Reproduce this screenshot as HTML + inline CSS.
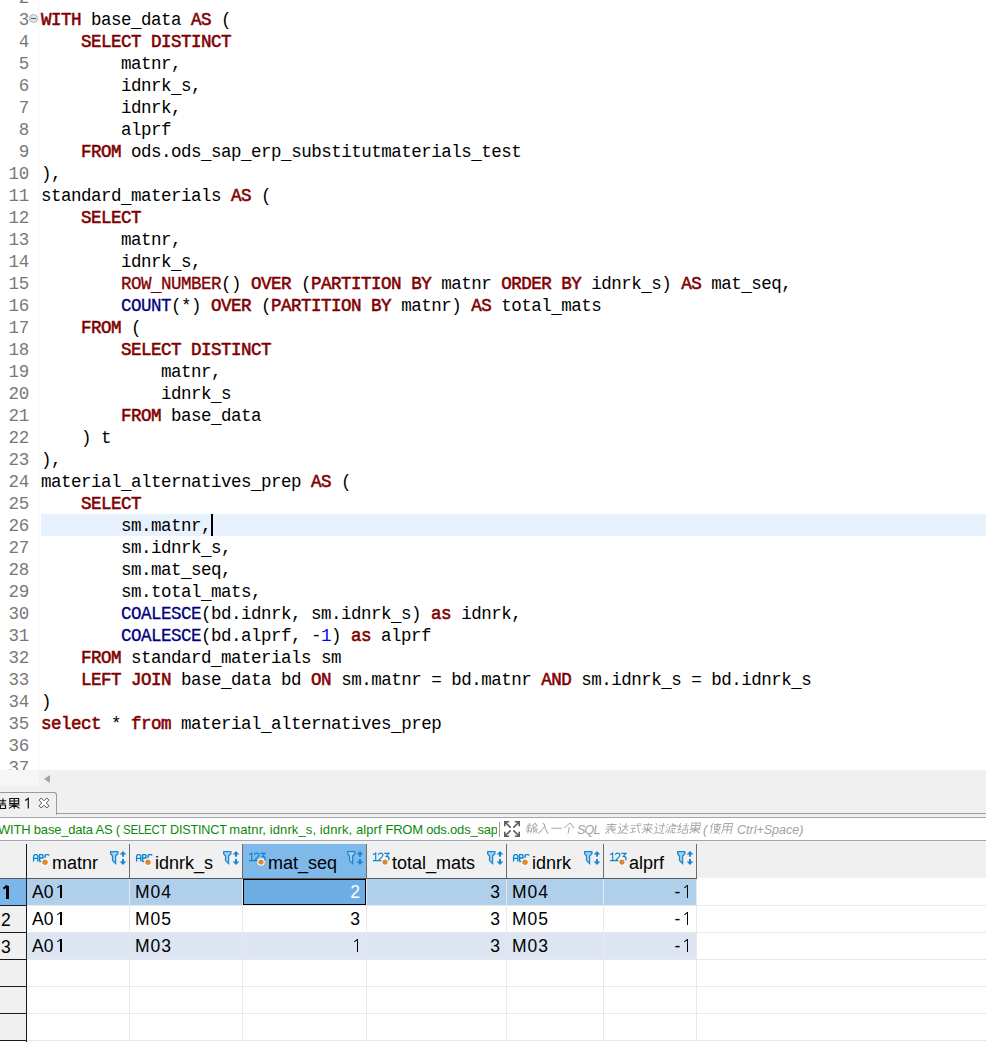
<!DOCTYPE html>
<html><head><meta charset="utf-8">
<style>
*{margin:0;padding:0;box-sizing:border-box}
html,body{width:986px;height:1042px;overflow:hidden;background:#fff}
body{position:relative;font-family:"Liberation Sans",sans-serif}
.ed{position:absolute;left:0;top:0;width:986px;height:770px;background:#fff;overflow:hidden}
.gl{position:absolute;left:38px;top:0;width:1px;height:770px;background:#f6f6f6}
.cur{position:absolute;left:41px;top:514px;width:945px;height:22px;background:#e8f2fe}
.ln{position:absolute;left:0;width:29px;text-align:right;height:22px;line-height:24px;font-family:"Liberation Mono",monospace;font-size:17.5px;letter-spacing:-0.3px;color:#787878;white-space:pre}
.cl{position:absolute;left:41px;height:22px;line-height:24px;font-family:"Liberation Mono",monospace;font-size:17.5px;letter-spacing:-0.5px;color:#000;white-space:pre}
i{font-style:normal}
.k{color:#800000;font-weight:normal;-webkit-text-stroke:0.55px #800000}
.f{color:#800000;-webkit-text-stroke:0.3px #800000}
.b{color:#000080;-webkit-text-stroke:0.3px #000080}
.n{color:#0000ff}
.caret{position:absolute;left:211px;top:514px;width:2px;height:22px;background:#000}
.fold{position:absolute;left:29px;top:14px;width:9px;height:9px;border-radius:50%;background:#dfe6ee;border:1px solid #a8b4c0}
.fold:after{content:"";position:absolute;left:1px;top:3px;width:5px;height:1px;background:#556}
.hs{position:absolute;left:0;top:770px;width:986px;height:16px;background:#f0f0f0}
.hsl{position:absolute;left:0;top:770px;width:39px;height:16px;background:#f6f6f6}
.arr{position:absolute;left:44px;top:775px;width:0;height:0;border-top:4px solid transparent;border-bottom:4px solid transparent;border-right:6px solid #a3a3a3}
.tabrow{position:absolute;left:0;top:786px;width:986px;height:32px;background:#f0f0f0}
.tab{position:absolute;left:-2px;top:792px;width:59px;height:23px;border:1px solid #9a9a9a;border-bottom:none;border-top-right-radius:3px;background:#f0f0f0}
.tbl{position:absolute;left:56px;top:813px;width:930px;height:1px;background:#9c9ca2}
.tbl2{position:absolute;left:0;top:817px;width:986px;height:1px;background:#a6a6ae}
.tabt{position:absolute;left:23px;top:794px;font-size:15px;line-height:18px;color:#000}
.filt{position:absolute;left:0;top:818px;width:986px;height:22px;background:#fff}
.ftxt{position:absolute;left:-2px;top:819px;width:499px;overflow:hidden;height:22px;line-height:22px;font-size:13px;letter-spacing:-0.2px;color:#0a8a0a;white-space:pre}
.fsep{position:absolute;left:499px;top:822px;width:1px;height:15px;background:#9a9a9a}
.phs{position:absolute;left:500px;top:818px}
.tabs{position:absolute;left:0;top:792px}
.exp{position:absolute;left:503.5px;top:820.5px}
.ph{position:absolute;left:577px;top:819px;height:22px;line-height:22px;font-size:12.5px;font-style:italic;color:#a2a2a2;white-space:pre}
.gtl{position:absolute;left:0;top:840px;width:986px;height:1px;background:#a6a6ae}
.grid{position:absolute;left:0;top:841px;width:986px;height:201px;background:#fff}
.hrow{position:absolute;left:0;top:841px;width:986px;height:37px;background:#f0f0f0}
.hc{position:absolute;top:844px;height:34px}
.hvl{position:absolute;top:844px;width:1px;height:34px;background:#6b6b6b}
.hbl{position:absolute;left:0;top:878px;width:697px;height:1px;background:#5a5a5a}
.ti{position:absolute;top:851px}
.fi{position:absolute;top:850px}
.ht{position:absolute;top:850px;height:26px;line-height:26px;font-size:18px;color:#000;white-space:pre}
.rb{position:absolute;left:27px;width:669px;height:26px}
.rl{position:absolute;left:27px;width:959px;height:1px;background:#e8e8e8}
.rnl{position:absolute;left:0;width:26px;height:1px;background:#1a1a1a}
.rn{position:absolute;left:0;width:26px;height:26px}
.rnt{position:absolute;left:1px;width:22px;height:26px;line-height:26px;font-size:17.5px;color:#000}
.ct{position:absolute;height:26px;line-height:26px;font-size:17.5px;color:#000;white-space:pre}
.cvl{position:absolute;top:879px;width:1px;height:163px;background:#e8e8e8}
.rnv{position:absolute;left:26px;top:844px;width:1px;height:198px;background:#1a1a1a}
.sel{position:absolute;left:243px;top:879px;width:123px;height:26px;background:#6eade4;border:1px solid #000}
.selt{position:absolute;left:243px;top:879px;width:117px;height:26px;line-height:26px;font-size:17.5px;color:#fff;text-align:right}
.one{display:inline-block;position:relative;width:9.73px;height:1px}
.one:before{content:"";position:absolute;left:6.3px;bottom:0;width:1.9px;height:12.6px;background:currentColor}
.one:after{content:"";position:absolute;left:3.3px;bottom:10.3px;width:4px;height:1.4px;background:currentColor;transform:rotate(-38deg)}
.ob:before{width:2.6px;left:5.2px}
.ob:after{height:2.3px;left:1.6px;width:5.2px}
u{position:relative;top:2px;text-decoration:none}
</style></head><body>

<div class="ed">
<div class="gl"></div>
<div class="cur"></div>
<div class="ln" style="top:-14px">2</div><div class="cl" style="top:-14px"></div>
<div class="ln" style="top:8px">3</div><div class="cl" style="top:8px"><i class="k">WITH</i> base<u>_</u>data <i class="k">AS</i> (</div>
<div class="ln" style="top:30px">4</div><div class="cl" style="top:30px">    <i class="k">SELECT</i> <i class="k">DISTINCT</i></div>
<div class="ln" style="top:52px">5</div><div class="cl" style="top:52px">        matnr,</div>
<div class="ln" style="top:74px">6</div><div class="cl" style="top:74px">        idnrk<u>_</u>s,</div>
<div class="ln" style="top:96px">7</div><div class="cl" style="top:96px">        idnrk,</div>
<div class="ln" style="top:118px">8</div><div class="cl" style="top:118px">        alprf</div>
<div class="ln" style="top:140px">9</div><div class="cl" style="top:140px">    <i class="k">FROM</i> ods.ods<u>_</u>sap<u>_</u>erp<u>_</u>substitutmaterials<u>_</u>test</div>
<div class="ln" style="top:162px">10</div><div class="cl" style="top:162px">),</div>
<div class="ln" style="top:184px">11</div><div class="cl" style="top:184px">standard<u>_</u>materials <i class="k">AS</i> (</div>
<div class="ln" style="top:206px">12</div><div class="cl" style="top:206px">    <i class="k">SELECT</i></div>
<div class="ln" style="top:228px">13</div><div class="cl" style="top:228px">        matnr,</div>
<div class="ln" style="top:250px">14</div><div class="cl" style="top:250px">        idnrk<u>_</u>s,</div>
<div class="ln" style="top:272px">15</div><div class="cl" style="top:272px">        <i class="f">ROW<u>_</u>NUMBER</i>() <i class="k">OVER</i> (<i class="k">PARTITION</i> <i class="k">BY</i> matnr <i class="k">ORDER</i> <i class="k">BY</i> idnrk<u>_</u>s) <i class="k">AS</i> mat<u>_</u>seq,</div>
<div class="ln" style="top:294px">16</div><div class="cl" style="top:294px">        <i class="b">COUNT</i>(*) <i class="k">OVER</i> (<i class="k">PARTITION</i> <i class="k">BY</i> matnr) <i class="k">AS</i> total<u>_</u>mats</div>
<div class="ln" style="top:316px">17</div><div class="cl" style="top:316px">    <i class="k">FROM</i> (</div>
<div class="ln" style="top:338px">18</div><div class="cl" style="top:338px">        <i class="k">SELECT</i> <i class="k">DISTINCT</i></div>
<div class="ln" style="top:360px">19</div><div class="cl" style="top:360px">            matnr,</div>
<div class="ln" style="top:382px">20</div><div class="cl" style="top:382px">            idnrk<u>_</u>s</div>
<div class="ln" style="top:404px">21</div><div class="cl" style="top:404px">        <i class="k">FROM</i> base<u>_</u>data</div>
<div class="ln" style="top:426px">22</div><div class="cl" style="top:426px">    ) t</div>
<div class="ln" style="top:448px">23</div><div class="cl" style="top:448px">),</div>
<div class="ln" style="top:470px">24</div><div class="cl" style="top:470px">material<u>_</u>alternatives<u>_</u>prep <i class="k">AS</i> (</div>
<div class="ln" style="top:492px">25</div><div class="cl" style="top:492px">    <i class="k">SELECT</i></div>
<div class="ln" style="top:514px">26</div><div class="cl" style="top:514px">        sm.matnr,</div>
<div class="ln" style="top:536px">27</div><div class="cl" style="top:536px">        sm.idnrk<u>_</u>s,</div>
<div class="ln" style="top:558px">28</div><div class="cl" style="top:558px">        sm.mat<u>_</u>seq,</div>
<div class="ln" style="top:580px">29</div><div class="cl" style="top:580px">        sm.total<u>_</u>mats,</div>
<div class="ln" style="top:602px">30</div><div class="cl" style="top:602px">        <i class="b">COALESCE</i>(bd.idnrk, sm.idnrk<u>_</u>s) <i class="k">as</i> idnrk,</div>
<div class="ln" style="top:624px">31</div><div class="cl" style="top:624px">        <i class="b">COALESCE</i>(bd.alprf, -<i class="n">1</i>) <i class="k">as</i> alprf</div>
<div class="ln" style="top:646px">32</div><div class="cl" style="top:646px">    <i class="k">FROM</i> standard<u>_</u>materials sm</div>
<div class="ln" style="top:668px">33</div><div class="cl" style="top:668px">    <i class="k">LEFT</i> <i class="k">JOIN</i> base<u>_</u>data bd <i class="k">ON</i> sm.matnr = bd.matnr <i class="k">AND</i> sm.idnrk<u>_</u>s = bd.idnrk<u>_</u>s</div>
<div class="ln" style="top:690px">34</div><div class="cl" style="top:690px">)</div>
<div class="ln" style="top:712px">35</div><div class="cl" style="top:712px"><i class="k">select</i> * <i class="k">from</i> material<u>_</u>alternatives<u>_</u>prep</div>
<div class="ln" style="top:734px">36</div><div class="cl" style="top:734px"></div>
<div class="ln" style="top:756px">37</div><div class="cl" style="top:756px"></div>
<div class="fold"></div>
<div class="caret"></div>
</div>
<div class="hs"></div><div class="hsl"></div><div class="arr"></div>
<div class="tabrow"></div>
<div class="tab"></div>
<div class="tbl"></div><div class="tbl2"></div>
<svg class="tabs" width="60" height="22" viewBox="0 792 60 22"><g fill="none" stroke="#111" stroke-width="1.15"><path transform="translate(-5.3,798) scale(1.0,0.93)" d="M2.6 0.5L0.6 4H3.2L0.5 7.6L4 7 M0.5 10.6L4.2 9.4 M5 3H11.5 M8.2 0.5V5.6 M5.6 5.6H10.8 M5.6 7.6H10.8V11.2H5.6Z"/><path transform="translate(8.4,798) scale(0.98,0.93)" d="M1.5 0.5H10.5V6H1.5Z M1.5 3.2H10.5 M6 0.5V11.5 M0.5 7.6H11.5 M6 7.6L0.5 11.2 M6 7.6L11.5 11.2"/></g><path d="M25.2 800.6L28.3 798.4V808.6" fill="none" stroke="#111" stroke-width="1.2"/><path d="M39.00 800.20L41.20 798.00L44.00 800.80L46.80 798.00L49.00 800.20L46.20 803.00L49.00 805.80L46.80 808.00L44.00 805.20L41.20 808.00L39.00 805.80L41.80 803.00Z" fill="#fff" stroke="#555" stroke-width="1"/></svg>
<div class="filt"></div>
<div class="ftxt">WITH base_data AS ( <span style="display:inline-block;transform-origin:0 0;transform:scaleX(0.88);margin-right:-6.3px">SELECT </span><span style="display:inline-block;transform-origin:0 0;transform:scaleX(0.971);margin-right:-1.8px">DISTINCT </span><span style="letter-spacing:0.1px">matnr, idnrk_s, idnrk, alprf </span>FROM ods.ods_sap_erp_substitutmaterials_test</div>
<div class="fsep"></div>
<svg class="phs" width="320" height="22" viewBox="0 0 320 22"><g fill="none" stroke="#a9a9a9" stroke-width="1"><path transform="translate(25,4.5) translate(0,11.5) skewX(-10) translate(0,-11.5) scale(0.95,0.96)" d="M0.5 2.8H5 M2.8 0.5V11.5 M0.8 5.6H5 M0.5 8.8H5.5 M1.2 4.2L1 7.5 M5.8 4L8.6 0.8L11.5 4 M6.8 4.6H10.4 M6 6V11.5 M6 6H8.6V11 M10 6.2V10 M11.5 5.6V11.5"/><path transform="translate(37.3,4.5) translate(0,11.5) skewX(-10) translate(0,-11.5) scale(0.95,0.96)" d="M3.8 0.8Q6 1.2 6.6 4.2T11.5 11.5 M6.2 3.8Q4.5 9 0.5 11.5"/><path transform="translate(49.8,4.5) translate(0,11.5) skewX(-10) translate(0,-11.5) scale(0.95,0.96)" d="M0.5 6H11.5"/><path transform="translate(62.3,4.5) translate(0,11.5) skewX(-10) translate(0,-11.5) scale(0.95,0.96)" d="M6 0.5L0.5 6 M6 0.5L11.5 6 M6 4.6V11.5"/><path transform="translate(104.4,4.5) translate(0,11.5) skewX(-10) translate(0,-11.5) scale(0.95,0.96)" d="M1 2H11 M1.6 4.4H10.4 M0.5 6.8H11.5 M6 0.5V6.8 M4.5 6.8Q3 9.5 0.8 11.5 M6 6.8Q8 10.5 11.5 11.5 M4 9.6V11.5 M7.5 9L10.5 7.6"/><path transform="translate(116.6,4.5) translate(0,11.5) skewX(-10) translate(0,-11.5) scale(0.95,0.96)" d="M1.2 0.8L2.8 2.6 M0.5 5H3V10 M0.5 11.5Q3 9.8 11.5 11.5 M4.6 4H11.5 M8 0.5V4Q7.6 7.8 4.6 9.6 M8.4 5.2L11.2 8.6"/><path transform="translate(128.7,4.5) translate(0,11.5) skewX(-10) translate(0,-11.5) scale(0.95,0.96)" d="M0.5 3H11.5 M7.8 0.5Q8.4 8 11.5 11 M9.6 0.8L10.8 2 M1 6H6.5 M3.6 6V10.2 M0.5 10.8L6.8 9.4"/><path transform="translate(140.8,4.5) translate(0,11.5) skewX(-10) translate(0,-11.5) scale(0.95,0.96)" d="M1 2.4H11 M6 0.5V11.5 M2.4 3.8L3.6 6 M9.6 3.8L8.4 6 M0.5 6.8H11.5 M6 6.8L0.8 11 M6 6.8L11.2 11"/><path transform="translate(152.8,4.5) translate(0,11.5) skewX(-10) translate(0,-11.5) scale(0.95,0.96)" d="M1.2 0.8L2.8 2.6 M0.5 5H3V10 M0.5 11.5Q3 9.8 11.5 11.5 M4.6 3.4H11.5 M9.2 0.5V9.4L8 8.8 M6 5.4L7.2 7.4"/><path transform="translate(164.8,4.5) translate(0,11.5) skewX(-10) translate(0,-11.5) scale(0.95,0.96)" d="M0.8 1.4L2 2.6 M0.5 4.6L1.6 5.6 M0.5 10.4L2.6 7 M6.5 0.5V2.6H10 M4 3.6H11.5V5 M4 3.6V6.5Q4 9.5 2.8 11.5 M5.6 6.2H10.6 M6.2 8L5.6 11 M7.6 7.4V10.6H11.2 M9.2 8L9.8 9.2"/><path transform="translate(176.8,4.5) translate(0,11.5) skewX(-10) translate(0,-11.5) scale(0.95,0.96)" d="M2.6 0.5L0.6 4H3.2L0.5 7.6L4 7 M0.5 10.6L4.2 9.4 M5 3H11.5 M8.2 0.5V5.6 M5.6 5.6H10.8 M5.6 7.6H10.8V11.2H5.6Z"/><path transform="translate(188.6,4.5) translate(0,11.5) skewX(-10) translate(0,-11.5) scale(0.95,0.96)" d="M1.5 0.5H10.5V6H1.5Z M1.5 3.2H10.5 M6 0.5V11.5 M0.5 7.6H11.5 M6 7.6L0.5 11.2 M6 7.6L11.5 11.2"/><path transform="translate(208.7,4.5) translate(0,11.5) skewX(-10) translate(0,-11.5) scale(0.95,0.96)" d="M3 0.5L0.5 5 M2 3.4V11.5 M4 2H11.5 M7.6 0.5V8 M5 4H10.6V7H5Z M5.2 8.4Q8 11 11.5 11.5 M10 8L5 11.5"/><path transform="translate(220.7,4.5) translate(0,11.5) skewX(-10) translate(0,-11.5) scale(0.95,0.96)" d="M1.6 1H10.6V11.5L9.4 11 M1.6 1V7Q1.6 10 0.5 11.5 M1.6 4.4H10.6 M1.6 7.6H10.6 M6.1 1V11.5"/></g></svg>
<div class="ph" style="left:577px;letter-spacing:-0.8px">SQL</div><div class="ph" style="left:703px">(</div><div class="ph" style="left:737px">Ctrl+Space)</div>
<svg class="exp" width="16" height="16" viewBox="0 0 16 16"><path d="M0.8 5.2V0.8H5.2M1.2 1.2L6.6 6.6M10.8 0.8H15.2V5.2M14.8 1.2L9.4 6.6M0.8 10.8V15.2H5.2M1.2 14.8L6.6 9.4M15.2 10.8V15.2H10.8M14.8 14.8L9.4 9.4" fill="none" stroke="#5e5e5e" stroke-width="1.6"/></svg>
<div class="gtl"></div>
<div class="grid"></div>
<div class="hrow"></div>
<div class="hc" style="left:27px;width:102px;background:#f0f0f0"></div>
<div class="hvl" style="left:129px"></div>
<svg class="ti" height="16" style="left:32px" width="18" viewBox="0 0 18 16"><g>
<path d="M1.6 10.5V4.9L2.8 3.6H4.6L5.8 4.9V10.5M1.6 7.4H5.8" fill="none" stroke="#0a84d0" stroke-width="1.35"/>
<path d="M7.6 10.5V3.6H10.2L11 4.4V6.2L10.2 7H7.6M10.2 7L11.2 7.8V9.7L10.4 10.5H7.6" fill="none" stroke="#0a84d0" stroke-width="1.35"/>
<path d="M17.2 4.4L16.4 3.6H13.9L13.1 4.4V7.5" fill="none" stroke="#0a84d0" stroke-width="1.35"/>
<circle cx="13" cy="11.2" r="3.3" fill="#e08632" stroke="#fff" stroke-width="1.1"/>
</g></svg>
<div class="ht" style="left:52px">matnr</div>
<svg class="fi" style="left:110px" width="18" height="16" viewBox="0 0 18 16"><g>
<path d="M0.6 1.6H7.9V3.7L5.6 6V13.6L2.5 10.5V6L0.6 3.7Z" fill="#a3d2f2" stroke="#1c86d2" stroke-width="1.25"/>
<path d="M9.6 4.4L13 1L16.4 4.4Z M12 4.4H14V6.8H12Z M12 8.9H14V11.6H12Z M9.6 11.6H16.4L13 15Z" fill="#1c86d2"/>
</g></svg>
<div class="hc" style="left:130px;width:112px;background:#f0f0f0"></div>
<div class="hvl" style="left:242px"></div>
<svg class="ti" height="16" style="left:135px" width="18" viewBox="0 0 18 16"><g>
<path d="M1.6 10.5V4.9L2.8 3.6H4.6L5.8 4.9V10.5M1.6 7.4H5.8" fill="none" stroke="#0a84d0" stroke-width="1.35"/>
<path d="M7.6 10.5V3.6H10.2L11 4.4V6.2L10.2 7H7.6M10.2 7L11.2 7.8V9.7L10.4 10.5H7.6" fill="none" stroke="#0a84d0" stroke-width="1.35"/>
<path d="M17.2 4.4L16.4 3.6H13.9L13.1 4.4V7.5" fill="none" stroke="#0a84d0" stroke-width="1.35"/>
<circle cx="13" cy="11.2" r="3.3" fill="#e08632" stroke="#fff" stroke-width="1.1"/>
</g></svg>
<div class="ht" style="left:155px">idnrk_s</div>
<svg class="fi" style="left:223px" width="18" height="16" viewBox="0 0 18 16"><g>
<path d="M0.6 1.6H7.9V3.7L5.6 6V13.6L2.5 10.5V6L0.6 3.7Z" fill="#a3d2f2" stroke="#1c86d2" stroke-width="1.25"/>
<path d="M9.6 4.4L13 1L16.4 4.4Z M12 4.4H14V6.8H12Z M12 8.9H14V11.6H12Z M9.6 11.6H16.4L13 15Z" fill="#1c86d2"/>
</g></svg>
<div class="hc" style="left:243px;width:123px;background:#7fb9ea"></div>
<div class="hvl" style="left:366px"></div>
<svg class="ti" height="16" style="left:248px" width="18" viewBox="0 0 18 16"><g>
<path d="M1.1 3.7L3.7 2.1V9.6M1 9.6H5.6M6.3 3.7Q6.9 2.1 8.6 2.1Q10.9 2.1 10.9 4.1Q10.9 5.6 6.3 9.6H11.3M12.3 2.3H16.9L14.3 5.3Q17.1 5.3 17.1 7.6Q17.1 9.8 14.6 9.8" fill="none" stroke="#0a84d0" stroke-width="1.15"/>
<circle cx="13" cy="11.1" r="3.2" fill="#e08632" stroke="#fff" stroke-width="1.1"/>
</g></svg>
<div class="ht" style="left:268px">mat_seq</div>
<svg class="fi" style="left:347px" width="18" height="16" viewBox="0 0 18 16"><g>
<path d="M0.6 1.6H7.9V3.7L5.6 6V13.6L2.5 10.5V6L0.6 3.7Z" fill="#a3d2f2" stroke="#1c86d2" stroke-width="1.25"/>
<path d="M9.6 4.4L13 1L16.4 4.4Z M12 4.4H14V6.8H12Z M12 8.9H14V11.6H12Z M9.6 11.6H16.4L13 15Z" fill="#1c86d2"/>
</g></svg>
<div class="hc" style="left:367px;width:139px;background:#f0f0f0"></div>
<div class="hvl" style="left:506px"></div>
<svg class="ti" height="16" style="left:372px" width="18" viewBox="0 0 18 16"><g>
<path d="M1.1 3.7L3.7 2.1V9.6M1 9.6H5.6M6.3 3.7Q6.9 2.1 8.6 2.1Q10.9 2.1 10.9 4.1Q10.9 5.6 6.3 9.6H11.3M12.3 2.3H16.9L14.3 5.3Q17.1 5.3 17.1 7.6Q17.1 9.8 14.6 9.8" fill="none" stroke="#0a84d0" stroke-width="1.15"/>
<circle cx="13" cy="11.1" r="3.2" fill="#e08632" stroke="#fff" stroke-width="1.1"/>
</g></svg>
<div class="ht" style="left:392px">total_mats</div>
<svg class="fi" style="left:487px" width="18" height="16" viewBox="0 0 18 16"><g>
<path d="M0.6 1.6H7.9V3.7L5.6 6V13.6L2.5 10.5V6L0.6 3.7Z" fill="#a3d2f2" stroke="#1c86d2" stroke-width="1.25"/>
<path d="M9.6 4.4L13 1L16.4 4.4Z M12 4.4H14V6.8H12Z M12 8.9H14V11.6H12Z M9.6 11.6H16.4L13 15Z" fill="#1c86d2"/>
</g></svg>
<div class="hc" style="left:507px;width:96px;background:#f0f0f0"></div>
<div class="hvl" style="left:603px"></div>
<svg class="ti" height="16" style="left:512px" width="18" viewBox="0 0 18 16"><g>
<path d="M1.6 10.5V4.9L2.8 3.6H4.6L5.8 4.9V10.5M1.6 7.4H5.8" fill="none" stroke="#0a84d0" stroke-width="1.35"/>
<path d="M7.6 10.5V3.6H10.2L11 4.4V6.2L10.2 7H7.6M10.2 7L11.2 7.8V9.7L10.4 10.5H7.6" fill="none" stroke="#0a84d0" stroke-width="1.35"/>
<path d="M17.2 4.4L16.4 3.6H13.9L13.1 4.4V7.5" fill="none" stroke="#0a84d0" stroke-width="1.35"/>
<circle cx="13" cy="11.2" r="3.3" fill="#e08632" stroke="#fff" stroke-width="1.1"/>
</g></svg>
<div class="ht" style="left:532px">idnrk</div>
<svg class="fi" style="left:584px" width="18" height="16" viewBox="0 0 18 16"><g>
<path d="M0.6 1.6H7.9V3.7L5.6 6V13.6L2.5 10.5V6L0.6 3.7Z" fill="#a3d2f2" stroke="#1c86d2" stroke-width="1.25"/>
<path d="M9.6 4.4L13 1L16.4 4.4Z M12 4.4H14V6.8H12Z M12 8.9H14V11.6H12Z M9.6 11.6H16.4L13 15Z" fill="#1c86d2"/>
</g></svg>
<div class="hc" style="left:604px;width:92px;background:#f0f0f0"></div>
<div class="hvl" style="left:696px"></div>
<svg class="ti" height="16" style="left:609px" width="18" viewBox="0 0 18 16"><g>
<path d="M1.1 3.7L3.7 2.1V9.6M1 9.6H5.6M6.3 3.7Q6.9 2.1 8.6 2.1Q10.9 2.1 10.9 4.1Q10.9 5.6 6.3 9.6H11.3M12.3 2.3H16.9L14.3 5.3Q17.1 5.3 17.1 7.6Q17.1 9.8 14.6 9.8" fill="none" stroke="#0a84d0" stroke-width="1.15"/>
<circle cx="13" cy="11.1" r="3.2" fill="#e08632" stroke="#fff" stroke-width="1.1"/>
</g></svg>
<div class="ht" style="left:629px">alprf</div>
<svg class="fi" style="left:677px" width="18" height="16" viewBox="0 0 18 16"><g>
<path d="M0.6 1.6H7.9V3.7L5.6 6V13.6L2.5 10.5V6L0.6 3.7Z" fill="#a3d2f2" stroke="#1c86d2" stroke-width="1.25"/>
<path d="M9.6 4.4L13 1L16.4 4.4Z M12 4.4H14V6.8H12Z M12 8.9H14V11.6H12Z M9.6 11.6H16.4L13 15Z" fill="#1c86d2"/>
</g></svg>
<div class="hvl" style="left:26px"></div>
<div class="hbl"></div>
<div class="rb" style="top:879px;background:#b0cfea"></div>
<div class="rl" style="top:905px"></div>
<div class="rnl" style="top:905px"></div>
<div class="rn" style="top:879px;background:#7bb6ea"></div>
<div class="rnt" style="top:880px;font-weight:bold"><i class="one ob"></i></div>
<div class="ct" style="top:879px;left:32px">A0<i class="one"></i></div>
<div class="ct" style="top:879px;left:135px;letter-spacing:1px">M04</div>
<div class="ct" style="top:879px;left:243px;width:117px;text-align:right">2</div>
<div class="ct" style="top:879px;left:367px;width:133px;text-align:right">3</div>
<div class="ct" style="top:879px;left:512px;letter-spacing:1px">M04</div>
<div class="ct" style="top:879px;left:604px;width:86px;text-align:right">-<i class="one"></i></div>
<div class="rb" style="top:906px;background:#ffffff"></div>
<div class="rl" style="top:932px"></div>
<div class="rnl" style="top:932px"></div>
<div class="rn" style="top:906px;background:#f0f0f0"></div>
<div class="rnt" style="top:907px;font-weight:normal">2</div>
<div class="ct" style="top:906px;left:32px">A0<i class="one"></i></div>
<div class="ct" style="top:906px;left:135px;letter-spacing:1px">M05</div>
<div class="ct" style="top:906px;left:243px;width:117px;text-align:right">3</div>
<div class="ct" style="top:906px;left:367px;width:133px;text-align:right">3</div>
<div class="ct" style="top:906px;left:512px;letter-spacing:1px">M05</div>
<div class="ct" style="top:906px;left:604px;width:86px;text-align:right">-<i class="one"></i></div>
<div class="rb" style="top:933px;background:#dce5f1"></div>
<div class="rl" style="top:959px"></div>
<div class="rnl" style="top:959px"></div>
<div class="rn" style="top:933px;background:#f0f0f0"></div>
<div class="rnt" style="top:934px;font-weight:normal">3</div>
<div class="ct" style="top:933px;left:32px">A0<i class="one"></i></div>
<div class="ct" style="top:933px;left:135px;letter-spacing:1px">M03</div>
<div class="ct" style="top:933px;left:243px;width:117px;text-align:right"><i class="one"></i></div>
<div class="ct" style="top:933px;left:367px;width:133px;text-align:right">3</div>
<div class="ct" style="top:933px;left:512px;letter-spacing:1px">M03</div>
<div class="ct" style="top:933px;left:604px;width:86px;text-align:right">-<i class="one"></i></div>
<div class="rl" style="top:986px"></div>
<div class="rnl" style="top:986px"></div>
<div class="rn" style="top:960px;background:#f0f0f0"></div>
<div class="rl" style="top:1013px"></div>
<div class="rnl" style="top:1013px"></div>
<div class="rn" style="top:987px;background:#f0f0f0"></div>
<div class="rl" style="top:1040px"></div>
<div class="rnl" style="top:1040px"></div>
<div class="rn" style="top:1014px;background:#f0f0f0"></div>
<div class="cvl" style="left:129px"></div>
<div class="cvl" style="left:242px"></div>
<div class="cvl" style="left:366px"></div>
<div class="cvl" style="left:506px"></div>
<div class="cvl" style="left:603px"></div>
<div class="cvl" style="left:696px"></div>
<div class="sel"></div><div class="selt">2</div>
<div class="rnv"></div>
</body></html>
